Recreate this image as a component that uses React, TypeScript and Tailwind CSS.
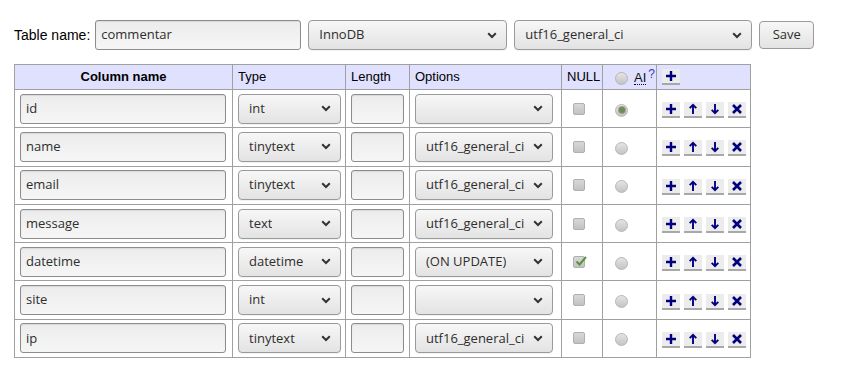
const rows = [
  { name: 'id', type: 'int', opt: '', nul: false, ai: true },
  { name: 'name', type: 'tinytext', opt: 'utf16_general_ci', nul: false, ai: false },
  { name: 'email', type: 'tinytext', opt: 'utf16_general_ci', nul: false, ai: false },
  { name: 'message', type: 'text', opt: 'utf16_general_ci', nul: false, ai: false },
  { name: 'datetime', type: 'datetime', opt: '(ON UPDATE)', nul: true, ai: false },
  { name: 'site', type: 'int', opt: '', nul: false, ai: false },
  { name: 'ip', type: 'tinytext', opt: 'utf16_general_ci', nul: false, ai: false },
];

const ctrl = "font-['Open_Sans',sans-serif] text-[13px] text-[#2e2e2e]";

function Chevron() {
  return (
    <svg width="10" height="7" viewBox="0 0 10 7" className="shrink-0">
      <path d="M1.2 1.3 L5 5 L8.8 1.3" fill="none" stroke="#333" strokeWidth="2" />
    </svg>
  );
}

function Select({ value, className }: { value: string; className: string }) {
  return (
    <div
      className={`${ctrl} ${className} flex items-center justify-between h-[30px] pl-[10px] pr-[9px] gap-1 rounded-[4px] border border-[#9a9a9a] bg-linear-to-b from-[#f7f7f7] to-[#e3e3e3] shadow-[0_1px_0_rgba(0,0,0,0.05)]`}
    >
      <span className="overflow-hidden whitespace-nowrap">{value}</span>
      <Chevron />
    </div>
  );
}

function TextBox({ value, className }: { value: string; className: string }) {
  return (
    <div
      className={`${ctrl} ${className} flex items-center h-[30px] pl-[5px] rounded-[3px] border border-[#8c8c8c] bg-linear-to-b from-[#ececec] to-[#f6f6f6] shadow-[inset_0_1px_1px_rgba(0,0,0,0.08)]`}
    >
      {value}
    </div>
  );
}

function ActBtn({ kind }: { kind: 'add' | 'up' | 'down' | 'del' }) {
  return (
    <span className="flex shrink-0 items-center justify-center w-[18px] h-[16px] bg-[#ececec] border-b-2 border-[#a8a8a8]">
      <svg width="12" height="12" viewBox="0 0 12 12">
        {kind === 'add' && <path d="M6 1 V11 M1 6 H11" stroke="#000080" strokeWidth="2.4" fill="none" />}
        {kind === 'up' && (
          <path d="M6 11 V2 M2.7 5.2 L6 1.8 L9.3 5.2" stroke="#000080" strokeWidth="1.9" fill="none" />
        )}
        {kind === 'down' && (
          <path d="M6 1 V10 M2.7 6.8 L6 10.2 L9.3 6.8" stroke="#000080" strokeWidth="1.9" fill="none" />
        )}
        {kind === 'del' && <path d="M2 2 L10 10 M10 2 L2 10" stroke="#000080" strokeWidth="2.6" fill="none" />}
      </svg>
    </span>
  );
}

function Radio({ checked }: { checked?: boolean }) {
  return (
    <span className="flex shrink-0 items-center justify-center w-[13px] h-[13px] rounded-full border border-[#b8b8b8] bg-linear-to-b from-[#e4e4e4] to-[#c4c4c4]">
      {checked && <span className="w-[6px] h-[6px] rounded-full bg-[#6f8a5c] shadow-[0_0_0_1px_#9aa890]" />}
    </span>
  );
}

function Check({ checked }: { checked?: boolean }) {
  return (
    <span className="relative flex shrink-0 items-center justify-center w-[12px] h-[12px] rounded-[2px] border border-[#b0b0b0] bg-linear-to-b from-[#d8d8d8] to-[#c2c2c2]">
      {checked && (
        <svg width="12" height="12" viewBox="0 0 12 12" className="absolute -top-[2px] left-[1px]">
          <path d="M1.5 6.5 L4.5 9.5 L11 2" stroke="#5d9140" strokeWidth="2" fill="none" />
        </svg>
      )}
    </span>
  );
}

export default function App() {
  const thBase = 'border border-[#a0a0a0] bg-[#e0e0ff] px-[5px] h-[25px]';
  const th = `${thBase} text-left font-normal`;
  const td = 'border border-[#a0a0a0] h-[38.3px] px-[5px]';
  return (
    <div className="w-[852px] h-[368px] bg-white pt-[20px] pl-[14px] font-['Liberation_Sans',Arial,sans-serif] text-[13px] text-black">
      <div className="flex items-center">
        <span className="text-[14px] mr-[5px]">Table name:</span>
        <TextBox value="commentar" className="w-[206px]" />
        <Select value="InnoDB" className="w-[199px] ml-[7px]" />
        <Select value="utf16_general_ci" className="w-[238px] ml-[7px]" />
        <button
          className={`${ctrl} ml-[7px] w-[55px] h-[28px] rounded-[4px] border border-[#9a9a9a] bg-linear-to-b from-[#f7f7f7] to-[#e3e3e3]`}
        >
          Save
        </button>
      </div>

      <table className="mt-[14px] border-collapse table-fixed w-[736px]">
        <colgroup>
          <col className="w-[218px]" />
          <col className="w-[113px]" />
          <col className="w-[64px]" />
          <col className="w-[152px]" />
          <col className="w-[41px]" />
          <col className="w-[54px]" />
          <col className="w-[94px]" />
        </colgroup>
        <thead>
          <tr>
            <th className={`${thBase} text-center font-bold`}>Column name</th>
            <th className={th}>Type</th>
            <th className={th}>Length</th>
            <th className={th}>Options</th>
            <th className={`${th} px-[4px]`}>NULL</th>
            <th className={`${th} pl-[12px] pr-0`}>
              <span className="flex items-center mt-[2px]">
                <Radio />
                <span className="ml-[6px] border-b border-dotted border-[#000033] leading-[13px] text-[#111]">AI</span>
                <span className="self-start -mt-[3px] ml-[2px] text-[#3a3ab8] text-[12px] leading-[12px]">?</span>
              </span>
            </th>
            <th className={th}>
              <span className="flex">
                <ActBtn kind="add" />
              </span>
            </th>
          </tr>
        </thead>
        <tbody>
          {rows.map((r) => (
            <tr key={r.name}>
              <td className={td}>
                <TextBox value={r.name} className="w-[206px]" />
              </td>
              <td className={td}>
                <Select value={r.type} className="w-[103px]" />
              </td>
              <td className={td}>
                <TextBox value="" className="w-[53px]" />
              </td>
              <td className={td}>
                <Select value={r.opt} className="w-[138px]" />
              </td>
              <td className={`${td} pl-[11px]`}>
                <Check checked={r.nul} />
              </td>
              <td className={`${td} pl-[12px]`}>
                <span className="flex mt-[3px]">
                  <Radio checked={r.ai} />
                </span>
              </td>
              <td className={td}>
                <span className="flex gap-[4px] mt-[3px]">
                  <ActBtn kind="add" />
                  <ActBtn kind="up" />
                  <ActBtn kind="down" />
                  <ActBtn kind="del" />
                </span>
              </td>
            </tr>
          ))}
        </tbody>
      </table>
    </div>
  );
}
